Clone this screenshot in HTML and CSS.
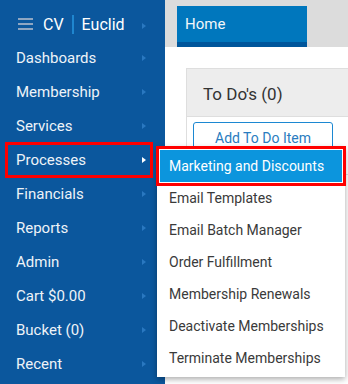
FILE: index.html
```html
<!DOCTYPE html>
<html>
<head>
<meta charset="utf-8">
<link rel="stylesheet" href="styles.css">
</head>
<body>
<div class="app">
  <nav class="sidebar">
    <div class="brand">
      <span class="burger"><i></i><i></i><i></i></span>
      <span class="cv">CV</span>
      <span class="sep"></span>
      <span class="euclid">Euclid</span>
      <span class="chev"></span>
    </div>
    <div class="item">Dashboards<span class="chev"></span></div>
    <div class="item">Membership<span class="chev"></span></div>
    <div class="item">Services<span class="chev"></span></div>
    <div class="item active">Processes<span class="chev"></span></div>
    <div class="item">Financials<span class="chev"></span></div>
    <div class="item">Reports<span class="chev"></span></div>
    <div class="item">Admin<span class="chev"></span></div>
    <div class="item">Cart $0.00<span class="chev"></span></div>
    <div class="item">Bucket (0)<span class="chev"></span></div>
    <div class="item">Recent<span class="chev"></span></div>
  </nav>
  <main class="main">
    <div class="topbar">
      <div class="tab">Home</div>
    </div>
    <div class="content">
      <div class="card">
        <div class="card-head">To Do's (0)</div>
        <div class="card-body">
          <button class="btn">Add To Do Item</button>
        </div>
      </div>
    </div>
  </main>
  <ul class="menu">
    <li class="hl">Marketing and Discounts</li>
    <li>Email Templates</li>
    <li>Email Batch Manager</li>
    <li>Order Fulfillment</li>
    <li>Membership Renewals</li>
    <li>Deactivate Memberships</li>
    <li>Terminate Memberships</li>
  </ul>
</div>
</body>
</html>
```
FILE: styles.css
```css
* { box-sizing: border-box; }
html, body { margin: 0; padding: 0; }
body {
  width: 348px;
  height: 384px;
  overflow: hidden;
  font-family: Roboto, "Liberation Sans", sans-serif;
  background: #fff;
}
.app {
  position: relative;
  display: grid;
  grid-template-columns: 165px 1fr;
  height: 384px;
}
.sidebar {
  background: #0b579d;
  color: #fff;
  display: flex;
  flex-direction: column;
}
.brand {
  height: 41px;
  display: flex;
  align-items: center;
  padding-left: 18px;
  padding-top: 7px;
  font-size: 16px;
  position: relative;
}
.burger {
  width: 15px;
  display: flex;
  flex-direction: column;
  gap: 3px;
  margin-right: 10px;
}
.burger i {
  display: block;
  height: 2px;
  background: #8ea6c2;
}
.cv { color: #fff; }
.sep {
  width: 2px;
  height: 19px;
  background: #1f86cf;
  margin: 0 8px 0 8px;
}
.euclid { color: #fff; }
.item {
  height: 34px;
  display: flex;
  align-items: center;
  padding-left: 16px;
  font-size: 15px;
  color: #eef3f8;
  position: relative;
}
.chev {
  position: absolute;
  left: 142px;
  top: 50%;
  margin-top: -3px;
  width: 0;
  height: 0;
  border-top: 3px solid transparent;
  border-bottom: 3px solid transparent;
  border-left: 4px solid #2a78c0;
}
.brand .chev { top: 26px; }
.item.active {
  outline: 3px solid #f00;
  outline-offset: -2px;
  margin: 0 13px 0 6px;
  padding-left: 10px;
}
.item.active .chev {
  left: 136px;
  border-left-color: #fff;
}
.main {
  display: flex;
  flex-direction: column;
}
.topbar {
  height: 47px;
  background: #dcdcdc;
  display: flex;
  align-items: flex-end;
  padding-left: 12px;
}
.tab {
  width: 130px;
  height: 41px;
  background: #0077bd;
  border-bottom: 5px solid #00569b;
  color: #f2f6fa;
  font-size: 15px;
  padding: 9px 0 0 8px;
}
.content {
  padding: 21px 0 0 21px;
}
.card {
  border: 1px solid #dedede;
  border-right: none;
}
.card-head {
  height: 48px;
  background: #ededed;
  border-bottom: 1px solid #dedede;
  font-size: 17px;
  color: #333;
  padding: 15px 0 0 16px;
}
.card-body {
  padding: 5px 0 20px 6px;
  background: #fff;
}
.btn {
  width: 140px;
  height: 32px;
  border: 1px solid #1c88d2;
  border-radius: 3px;
  background: #fff;
  color: #2a7cc0;
  font-family: Roboto, "Liberation Sans", sans-serif;
  font-size: 14px;
  padding: 0;
}
.menu {
  position: absolute;
  left: 157px;
  top: 147px;
  width: 188px;
  margin: 0;
  padding: 3px;
  list-style: none;
  background: #fff;
  box-shadow: 0 2px 6px rgba(0, 0, 0, 0.35);
}
.menu li {
  height: 32px;
  display: flex;
  align-items: center;
  padding-left: 9px;
  font-size: 14px;
  color: #3a3a3a;
}
.menu li.hl {
  background: #0c95dd;
  color: #fff;
  outline: 3px solid #f00;
  outline-offset: 1px;
}
```
